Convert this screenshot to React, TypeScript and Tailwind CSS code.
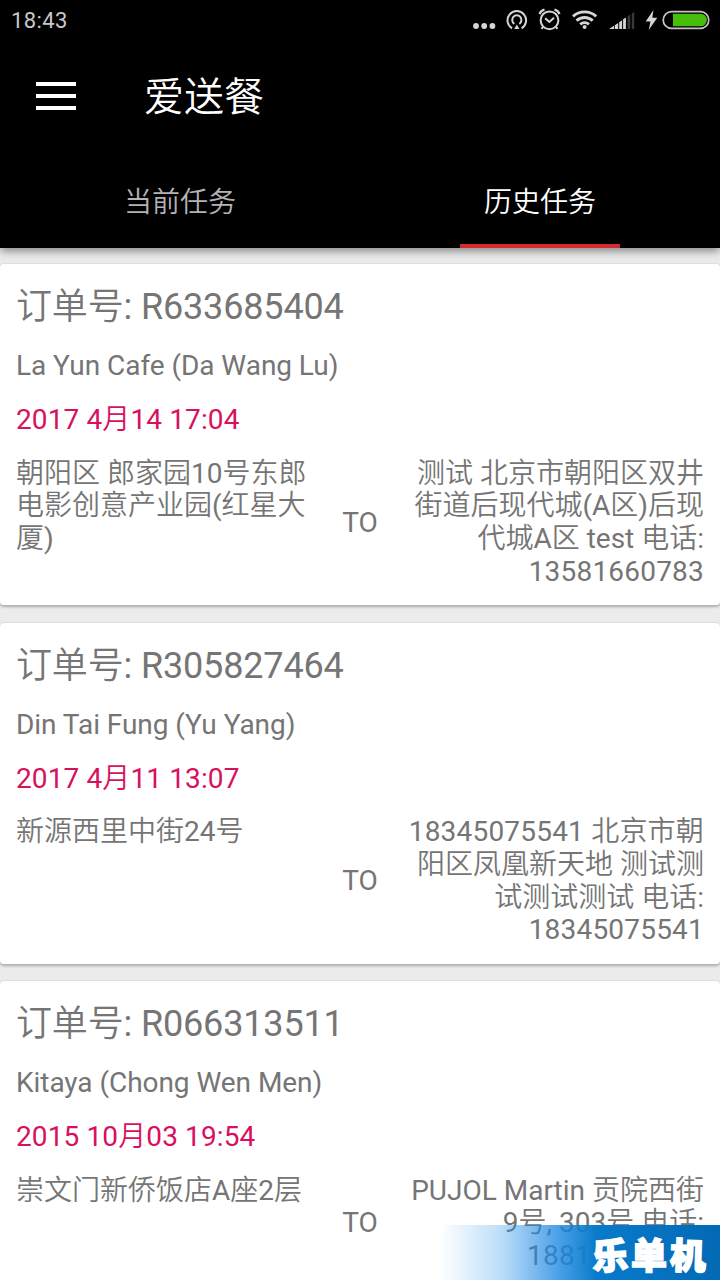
type Order = {
  id: string;
  shop: string;
  time: string;
  from: string[];
  to: string[];
  partial?: boolean;
};

const orders: Order[] = [
  {
    id: 'R633685404',
    shop: 'La Yun Cafe (Da Wang Lu)',
    time: '2017 4月14 17:04',
    from: ['朝阳区 郎家园10号东郎', '电影创意产业园(红星大', '厦)'],
    to: ['测试 北京市朝阳区双井', '街道后现代城(A区)后现', '代城A区 test 电话:', '13581660783'],
  },
  {
    id: 'R305827464',
    shop: 'Din Tai Fung (Yu Yang)',
    time: '2017 4月11 13:07',
    from: ['新源西里中街24号'],
    to: ['18345075541 北京市朝', '阳区凤凰新天地 测试测', '试测试测试 电话:', '18345075541'],
  },
  {
    id: 'R066313511',
    shop: 'Kitaya (Chong Wen Men)',
    time: '2015 10月03 19:54',
    from: ['崇文门新侨饭店A座2层'],
    to: ['PUJOL Martin 贡院西街', '9号, 303号 电话:', '1881'],
    partial: true,
  },
];

function StatusIcons() {
  return (
    <svg width="260" height="40" viewBox="460 0 260 40" fill="none" stroke="#d6d6d6">
      <g fill="#d6d6d6" stroke="none">
        <circle cx="476" cy="26" r="2.9" />
        <circle cx="484.2" cy="26" r="2.9" />
        <circle cx="492.4" cy="26" r="2.9" />
      </g>
      <g strokeWidth="2">
        <path d="M512 28.3a9.3 9.3 0 1 1 9.6 0" />
        <path d="M514.3 23.8a4.6 4.6 0 1 1 5 0" />
        <path d="M516.8 24.5l2.6 4.5h-5.2z" fill="#d6d6d6" stroke="none" />
      </g>
      <g strokeWidth="2">
        <circle cx="549.5" cy="20.3" r="8.9" />
        <path d="M545.2 18.2l4.2 3.8 4.6-4.2" />
        <path d="M539.5 14.2c.8-2.4 2.6-4 5-4.5M559.5 14.2c-.8-2.4-2.6-4-5-4.5" strokeWidth="2.2" />
        <path d="M543.3 26.5l-1.8 2.3M555.7 26.5l1.8 2.3" />
      </g>
      <g strokeWidth="2.9">
        <path d="M573 16.4a17 17 0 0 1 23.2 0" />
        <path d="M576.5 20.6a12 12 0 0 1 16.2 0" />
        <path d="M580.2 24.4a6.8 6.8 0 0 1 8.8 0" />
        <circle cx="584.6" cy="27" r="2" fill="#d6d6d6" stroke="none" />
      </g>
      <g stroke="none" fill="#d6d6d6">
        <path d="M609 29l5-3.2V29zM614.8 25.2l3.4-2.2v6h-3.4zM619.2 22.2l2.9-2V29h-2.9zM623.1 19.3l2.8-1.8V29h-2.8z" />
        <path d="M627.6 16.2l2.6-1.6V29h-2.6zM631.8 13.4l2.4-1.4v17h-2.4z" fill="#393939" />
        <path d="M653.5 10l-7.8 11.5h4.8L648.7 30l8.6-12.2h-5z" />
      </g>
      <rect x="663.2" y="11.7" width="45.6" height="16.6" rx="8.3" stroke="#c7c2c8" strokeWidth="1.7" />
      <path d="M673 13.7h27.6a6.3 6.3 0 0 1 0 12.6H673z" fill="#46bd0b" stroke="none" />
    </svg>
  );
}

function lineClass(order: Order, line: string, index: number) {
  if (order.partial && index === 2) return 'pr-[113px] tracking-[0.25px]';
  return /^\d{11}/.test(line) ? 'tracking-[0.2px]' : '';
}

function OrderCard({ order }: { order: Order }) {
  return (
    <article className="h-[341px] shrink-0 rounded-[4px] bg-white px-4 pt-[22px] text-[28px] leading-[33px] whitespace-nowrap text-[#757575] shadow-[0_2px_3px_rgba(0,0,0,0.28),0_-1px_1px_rgba(0,0,0,0.06)]">
      <h2 className="text-[36px] leading-[42px] tracking-[-0.15px]">订单号: {order.id}</h2>
      <p className="mt-[21px] tracking-[-0.05px]">{order.shop}</p>
      <p className="mt-[21px] tracking-[0.12px] text-[#d8105e]">{order.time}</p>
      <div className="mt-[21.5px] flex leading-[32.8px]">
        <div className="flex-1">
          {order.from.map((line) => (
            <p key={line}>{line}</p>
          ))}
        </div>
        <span className="w-[36px] self-center text-center">TO</span>
        <div className="flex-1 text-right">
          {order.to.map((line, i) => (
            <p key={i} className={lineClass(order, line, i)}>
              {line}
            </p>
          ))}
        </div>
      </div>
    </article>
  );
}

export default function App() {
  return (
    <div className="relative flex h-[1280px] w-[720px] flex-col overflow-hidden bg-[#ececec] font-[Roboto,'Noto_Sans_CJK_SC_DemiLight','Noto_Sans_CJK_SC',sans-serif]">
      <header className="z-10 flex h-[248px] shrink-0 flex-col bg-black text-white shadow-[0_3px_9px_rgba(0,0,0,0.45)]">
        <div className="flex h-10 items-center justify-between">
          <span className="pt-px pl-[11px] text-[22px] tracking-[0.4px] text-[#c9c9c9]">18:43</span>
          <StatusIcons />
        </div>
        <div className="flex h-[112px] items-center pl-9">
          <div className="flex w-10 flex-col gap-2">
            <i className="h-1 bg-white" />
            <i className="h-1 bg-white" />
            <i className="h-1 bg-white" />
          </div>
          <h1 className="ml-[68px] pt-0.5 text-[40px] leading-[47px]">爱送餐</h1>
        </div>
        <nav className="grid h-24 grid-cols-2 text-[28px]">
          <div className="flex items-center justify-center pt-[5px] text-[#b3b3b3]">当前任务</div>
          <div className="flex flex-col items-center">
            <span className="flex h-[92px] items-center pt-[9px]">历史任务</span>
            <i className="h-1 w-40 bg-[#d32c2f]" />
          </div>
        </nav>
      </header>
      <main className="flex flex-col gap-[17.6px] pt-4">
        {orders.map((order) => (
          <OrderCard key={order.id} order={order} />
        ))}
      </main>
      <div className="absolute right-0 bottom-0 flex h-[55px] w-[280px] items-center justify-end gap-[3px] bg-[linear-gradient(90deg,rgba(30,145,235,0)_0%,rgba(30,145,235,0.3)_22%,rgba(28,135,225,0.78)_42%,#087bcb_56%,#0369b5_100%)] pr-[14px] font-['Noto_Sans_CJK_SC',sans-serif] text-[36px] leading-[40px] font-black text-white [-webkit-text-stroke:1.6px_white]">
        <span className="-rotate-3">乐</span>
        <span>单</span>
        <span className="rotate-2">机</span>
      </div>
    </div>
  );
}
